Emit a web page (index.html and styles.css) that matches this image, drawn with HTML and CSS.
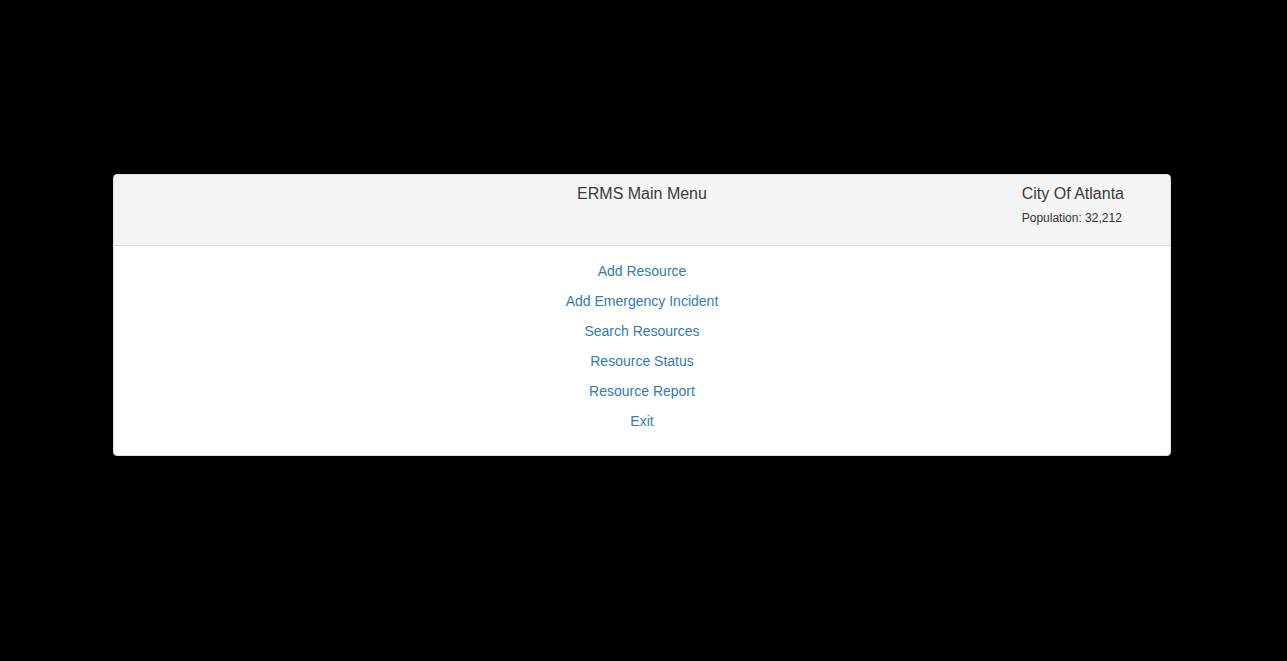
FILE: index.html
```html
<!DOCTYPE html>
<html>
<head>
<meta charset="utf-8">
<link rel="stylesheet" href="styles.css">
</head>
<body>
<div class="page">
  <div class="panel">
    <div class="panel-heading">
      <div class="spacer"></div>
      <div class="title">ERMS Main Menu</div>
      <div class="city">
        <div class="city-name">City Of Atlanta</div>
        <div class="population">Population: 32,212</div>
      </div>
    </div>
    <div class="panel-body">
      <a class="menu-link" href="#">Add Resource</a>
      <a class="menu-link" href="#">Add Emergency Incident</a>
      <a class="menu-link" href="#">Search Resources</a>
      <a class="menu-link" href="#">Resource Status</a>
      <a class="menu-link" href="#">Resource Report</a>
      <a class="menu-link" href="#">Exit</a>
    </div>
  </div>
</div>
</body>
</html>
```

FILE: styles.css
```css
html, body {
  margin: 0;
  padding: 0;
  background: #000;
  height: 100%;
}
body {
  font-family: "Liberation Sans", Arial, sans-serif;
  color: #333;
}
.page {
  padding-top: 174px;
  padding-left: 113px;
}
.panel {
  width: 1056px;
  background: #fff;
  border: 1px solid #ddd;
  border-radius: 4px;
  overflow: hidden;
}
.panel-heading {
  background: #f5f5f5;
  border-bottom: 1px solid #ddd;
  height: 70px;
  box-sizing: content-box;
  display: grid;
  grid-template-columns: 1fr auto 1fr;
  align-items: start;
}
.title {
  font-size: 16px;
  line-height: 22px;
  padding-top: 8px;
  text-align: center;
  color: #3a3a3a;
}
.city {
  justify-self: end;
  margin-right: 46px;
  padding-top: 8px;
}
.city-name {
  font-size: 16px;
  line-height: 22px;
  color: #3a3a3a;
}
.population {
  font-size: 12px;
  line-height: 17px;
  margin-top: 5px;
}
.panel-body {
  display: flex;
  flex-direction: column;
  align-items: center;
  padding: 15px 0 24px;
  gap: 10px;
}
.menu-link {
  font-size: 14px;
  line-height: 20px;
  color: #337ab7;
  text-decoration: none;
}
```
